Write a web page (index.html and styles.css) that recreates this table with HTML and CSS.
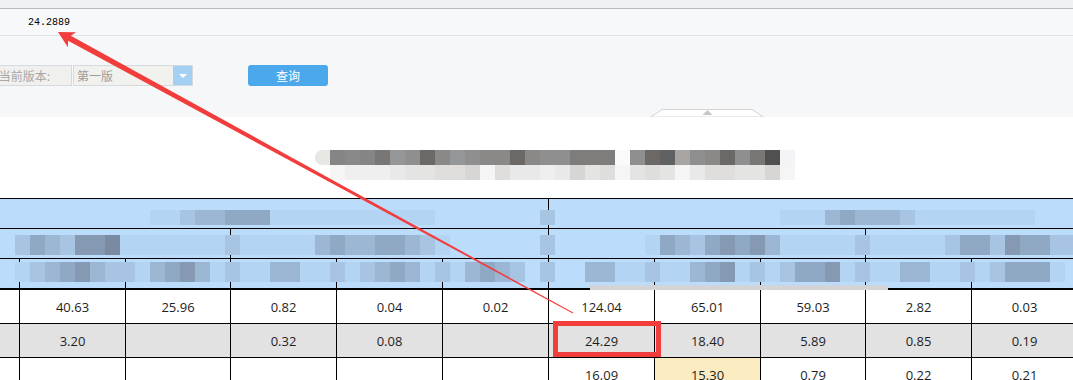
FILE: index.html
```html
<!DOCTYPE html>
<html lang="zh-CN">
<head>
<meta charset="utf-8">
<title>报表</title>
<link rel="stylesheet" href="styles.css">
</head>
<body>
<div class="page">
  <div class="topstrip"></div>
  <div class="valuebar"><span class="value">24.2889</span></div>
  <div class="querypanel">
    <div class="form">
      <label class="lbl">当前版本:</label>
      <div class="select">
        <span class="sel-text">第一版</span>
        <span class="sel-btn"><svg width="8" height="4" viewBox="0 0 8 4"><polygon points="0,0 8,0 4,4" fill="#fff"/></svg></span>
      </div>
      <button class="btn">查询</button>
    </div>
    <div class="collapse">
      <svg width="114" height="8" viewBox="0 0 114 8"><polygon points="0.5,8 12,0.5 102,0.5 113.5,8" fill="#fff" stroke="#d4d4d4" stroke-width="1"/><polygon points="52.5,6 57.5,1 62.5,6" fill="#c6c6c6"/></svg>
    </div>
  </div>

  <div class="report">
    <div class="mosaic">
      <div class="mrow"><i class="f first"></i><i class="d6"></i><i class="d7"></i><i class="d6"></i><i class="d4"></i><i class="d9"></i><i class="d8"></i><i class="d3"></i><i class="d7"></i><i class="d9"></i><i class="d8"></i><i class="d7"></i><i class="d7"></i><i class="d3"></i><i class="d7"></i><i class="d8"></i><i class="d8"></i><i class="d5"></i><i class="d5"></i><i class="d5"></i><i class="w"></i><i class="d8"></i><i class="d3"></i><i class="d2"></i><i class="d10"></i><i class="d8"></i><i class="d7"></i><i class="d3"></i><i class="d8"></i><i class="d4"></i><i class="d1"></i><i class="f2"></i></div>
      <div class="mrow"><i></i><i class="l6"></i><i class="l5"></i><i class="l5"></i><i class="l5"></i><i class="l4"></i><i class="l3"></i><i class="l3"></i><i class="l2"></i><i class="l2"></i><i class="l1"></i><i class="l6"></i><i class="l2"></i><i class="l4"></i><i class="l4"></i><i class="l5"></i><i class="l4"></i><i class="l1"></i><i class="l3"></i><i class="l2"></i><i class="l6"></i><i class="l3"></i><i class="l2"></i><i class="l3"></i><i class="l6"></i><i class="l4"></i><i class="l2"></i><i class="l2"></i><i class="l3"></i><i class="l3"></i><i class="l1"></i><i class="l6"></i></div>
    </div>

    <div class="tbl">
      <div class="hrow r1">
        <div class="cols">
          <div class="h s6"></div><div class="h s5"></div>
        </div>
        <div class="band"><i></i><i></i><i></i><i></i><i></i><i></i><i></i><i></i><i></i><i></i><i class="b0"></i><i class="b0"></i><i class="b1"></i><i class="b2"></i><i class="b2"></i><i class="b3"></i><i class="b3"></i><i class="b3"></i><i class="b0"></i><i class="b0"></i><i class="b0"></i><i class="b0"></i><i class="b0"></i><i class="b0"></i><i class="b0"></i><i class="b0"></i><i class="b0"></i><i class="b0"></i><i class="b0"></i><i></i><i></i><i></i><i></i><i></i><i></i><i></i><i class="b1"></i><i></i><i></i><i></i><i></i><i></i><i></i><i></i><i></i><i></i><i></i><i></i><i></i><i></i><i></i><i></i><i class="b0"></i><i class="b0"></i><i class="b0"></i><i class="b2"></i><i class="b3"></i><i class="b2"></i><i class="b2"></i><i class="b2"></i><i class="b1"></i><i class="b0"></i><i class="b0"></i><i class="b0"></i><i class="b0"></i><i class="b0"></i><i class="b0"></i><i class="b0"></i><i class="b0"></i><i></i><i></i><i></i></div>
      </div>

      <div class="hrow r2">
        <div class="cols">
          <div class="h s3"></div><div class="h s3"></div><div class="h s3"></div><div class="h s2"></div>
        </div>
        <div class="band"><i></i><i class="b1"></i><i class="b3"></i><i class="b2"></i><i class="b1"></i><i class="b4"></i><i class="b4"></i><i class="b5"></i><i class="b0"></i><i class="b0"></i><i class="b0"></i><i class="b0"></i><i class="b0"></i><i class="b0"></i><i class="b0"></i><i class="b1"></i><i class="b0"></i><i class="b0"></i><i class="b0"></i><i class="b0"></i><i class="b0"></i><i class="b2"></i><i class="b3"></i><i class="b2"></i><i class="b2"></i><i class="b3"></i><i class="b3"></i><i class="b2"></i><i class="b1"></i><i class="b0"></i><i></i><i></i><i></i><i></i><i></i><i></i><i class="b1"></i><i></i><i></i><i></i><i></i><i></i><i></i><i class="b0"></i><i class="b3"></i><i class="b2"></i><i class="b1"></i><i class="b3"></i><i class="b4"></i><i class="b3"></i><i class="b4"></i><i class="b2"></i><i class="b0"></i><i class="b0"></i><i class="b0"></i><i class="b0"></i><i class="b0"></i><i class="b1"></i><i class="b0"></i><i class="b0"></i><i class="b0"></i><i class="b0"></i><i class="b0"></i><i class="b1"></i><i class="b3"></i><i class="b3"></i><i class="b1"></i><i class="b4"></i><i class="b3"></i><i class="b3"></i><i class="b1"></i><i class="b1"></i></div>
      </div>

      <div class="hrow r3">
        <div class="cols">
          <div class="h"></div><div class="h"></div><div class="h"></div><div class="h"></div><div class="h"></div><div class="h"></div><div class="h"></div><div class="h"></div><div class="h"></div><div class="h"></div><div class="h"></div>
        </div>
        <div class="band"><i></i><i class="b0"></i><i class="b1"></i><i class="b2"></i><i class="b3"></i><i class="b4"></i><i class="b2"></i><i class="b1"></i><i class="b1"></i><i class="b0"></i><i class="b2"></i><i class="b3"></i><i class="b4"></i><i class="b2"></i><i class="b0"></i><i class="b1"></i><i class="b0"></i><i class="b0"></i><i class="b2"></i><i class="b2"></i><i class="b0"></i><i class="b0"></i><i class="b1"></i><i class="b0"></i><i class="b1"></i><i class="b2"></i><i class="b3"></i><i class="b2"></i><i class="b0"></i><i class="b1"></i><i class="b0"></i><i class="b2"></i><i class="b3"></i><i class="b2"></i><i class="b1"></i><i></i><i class="b1"></i><i></i><i></i><i class="b2"></i><i class="b2"></i><i class="b0"></i><i class="b0"></i><i class="b1"></i><i class="b0"></i><i class="b0"></i><i class="b2"></i><i class="b3"></i><i class="b4"></i><i class="b0"></i><i class="b1"></i><i class="b0"></i><i class="b1"></i><i class="b3"></i><i class="b3"></i><i class="b4"></i><i class="b0"></i><i class="b1"></i><i class="b0"></i><i class="b0"></i><i class="b2"></i><i class="b2"></i><i class="b0"></i><i class="b0"></i><i class="b1"></i><i class="b0"></i><i class="b1"></i><i class="b3"></i><i class="b3"></i><i class="b3"></i><i class="b0"></i><i></i></div>
        <div class="smudge"></div>
      </div>

      <div class="cols drow">
        <div class="c"></div><div class="c">40.63</div><div class="c">25.96</div><div class="c">0.82</div><div class="c">0.04</div><div class="c">0.02</div><div class="c">124.04</div><div class="c">65.01</div><div class="c">59.03</div><div class="c">2.82</div><div class="c">0.03</div>
      </div>
      <div class="cols drow gray">
        <div class="c"></div><div class="c">3.20</div><div class="c"></div><div class="c">0.32</div><div class="c">0.08</div><div class="c"></div><div class="c">24.29</div><div class="c">18.40</div><div class="c">5.89</div><div class="c">0.85</div><div class="c">0.19</div>
      </div>
      <div class="cols drow">
        <div class="c"></div><div class="c"></div><div class="c"></div><div class="c"></div><div class="c"></div><div class="c"></div><div class="c">16.09</div><div class="c yellow">15.30</div><div class="c">0.79</div><div class="c">0.22</div><div class="c">0.21</div>
      </div>
    </div>
  </div>

  <svg class="annot" width="1073" height="380" viewBox="0 0 1073 380">
    <polygon points="58,32 76.1,32.2 70.8,35.8 573.2,312.6 572.8,313.4 68.1,40.7 67.9,47.2" fill="#f23d3d"/>
    <rect x="555.5" y="323.5" width="103" height="31" fill="none" stroke="#f23d3d" stroke-width="5"/>
  </svg>
</div>
</body>
</html>
```

FILE: styles.css
```css
* {
  box-sizing: border-box;
  margin: 0;
  padding: 0;
}

html, body {
  width: 1073px;
  height: 380px;
  overflow: hidden;
  background: #fff;
}

body {
  font-family: "Noto Sans CJK SC", "Open Sans", sans-serif;
}

.page {
  position: relative;
  width: 1073px;
  height: 380px;
  overflow: hidden;
}

/* top strip */
.topstrip {
  height: 9px;
  background: #eff0f2;
  border-bottom: 1px solid #b9b9b9;
}

.valuebar {
  height: 27px;
  background: #f7f8fa;
  border-bottom: 1px solid #e1e3e6;
  display: flex;
  align-items: center;
  padding: 2px 0 0 28px;
}

.value {
  font-family: "Liberation Mono", monospace;
  font-size: 10px;
  line-height: 1;
  color: #000;
}

/* query panel */
.querypanel {
  position: relative;
  height: 81px;
  background: #f6f7f9;
  padding-top: 29px;
}

.form {
  display: flex;
  height: 21px;
}

.lbl {
  width: 72px;
  background: #f0f0ee;
  border: 1px solid #d6d9dd;
  border-left: 0;
  font-size: 12px;
  color: #a6a6a6;
  display: flex;
  align-items: center;
  justify-content: flex-end;
  padding-right: 21px;
  white-space: nowrap;
  overflow: hidden;
}

.select {
  margin-left: 1px;
  width: 120px;
  display: flex;
  border: 1px solid #d6d9dd;
  background: #f1f1ee;
}

.sel-text {
  flex: 1;
  padding-left: 3px;
  font-size: 12px;
  color: #9c9c9c;
  display: flex;
  align-items: center;
}

.sel-btn {
  width: 19px;
  background: #a4d0f4;
  display: flex;
  align-items: center;
  justify-content: center;
}

.sel-btn svg {
  display: block;
}

.btn {
  margin-left: 55px;
  width: 80px;
  height: 21px;
  background: #4ba8ea;
  border: 0;
  border-radius: 3px;
  color: #fff;
  font-family: "Noto Sans CJK SC", sans-serif;
  font-size: 12px;
  line-height: 21px;
}

.collapse {
  position: absolute;
  left: 650px;
  bottom: 0;
  width: 114px;
  height: 8px;
}

.collapse svg {
  display: block;
}

/* report */
.report {
  padding-top: 33px;
}

.mosaic {
  margin-left: 315px;
  height: 30px;
  margin-bottom: 18px;
}

.mrow {
  display: flex;
  height: 15px;
}

.mrow i {
  width: 15px;
  flex: none;
}

.mrow .first { border-radius: 7px 0 0 7px; }

.f  { background: #e9e7e4; }
.f2 { background: #f4f4f6; }
.w  { background: #fafafa; }
.d1 { background: #4f504f; }
.d2 { background: #5f6162; }
.d3 { background: #6c6866; }
.d4 { background: #787776; }
.d5 { background: #7f7d7b; }
.d6 { background: #858585; }
.d7 { background: #8a8988; }
.d8 { background: #8f8f8f; }
.d9 { background: #959697; }
.d10 { background: #a8a4a1; }
.l1 { background: #d8d6d4; }
.l2 { background: #dfdedc; }
.l3 { background: #e4e4e3; }
.l4 { background: #e9e9e9; }
.l5 { background: #efefef; }
.l6 { background: #f5f5f6; }

/* table */
.tbl {
  width: 1078px;
  border-top: 1px solid #000;
}

.cols {
  display: grid;
  grid-template-columns: 20px 106px 105px 106px 106px 106px 106px 106px 105px 106px 106px;
}

.hrow {
  display: grid;
  width: 1078px;
}

.hrow > * {
  grid-area: 1 / 1;
}

.r1 .cols, .r2 .cols { height: 30px; }
.r3 .cols { height: 31px; }

.h {
  background: #bbdcfb;
  border-right: 1px solid #000;
  border-bottom: 1px solid #000;
}

.r3 .h { border-bottom-width: 2px; }

.s2 { grid-column: span 2; }
.s3 { grid-column: span 3; }
.s5 { grid-column: span 5; }
.s6 { grid-column: span 6; }

.band {
  display: flex;
  align-self: start;
}

.band i {
  width: 15px;
  flex: none;
}

.r1 .band { margin-top: 11px; height: 15px; }
.r2 .band { margin-top: 6px; height: 20px; }
.r3 .band { margin-top: 3px; height: 20px; }

.b0 { background: #b4d4f4; }
.b1 { background: #a7c5e3; }
.b2 { background: #9bb7d3; }
.b3 { background: #8fa9c4; }
.b4 { background: #8599b3; }
.b5 { background: #7a8aa1; }

.smudge {
  align-self: end;
  margin-left: 590px;
  width: 298px;
  height: 5px;
  background: #d2d4d7;
}

.drow {
  height: 34px;
}

.c {
  border-right: 1px solid #000;
  border-bottom: 1px solid #000;
  display: flex;
  align-items: center;
  justify-content: center;
  font-family: "Open Sans", sans-serif;
  font-size: 13px;
  color: #1e1e1e;
}

.gray { background: #e3e2e3; }
.yellow { background: #fbebc0; }

/* annotation overlay */
.annot {
  position: absolute;
  left: 0;
  top: 0;
  pointer-events: none;
}
```
